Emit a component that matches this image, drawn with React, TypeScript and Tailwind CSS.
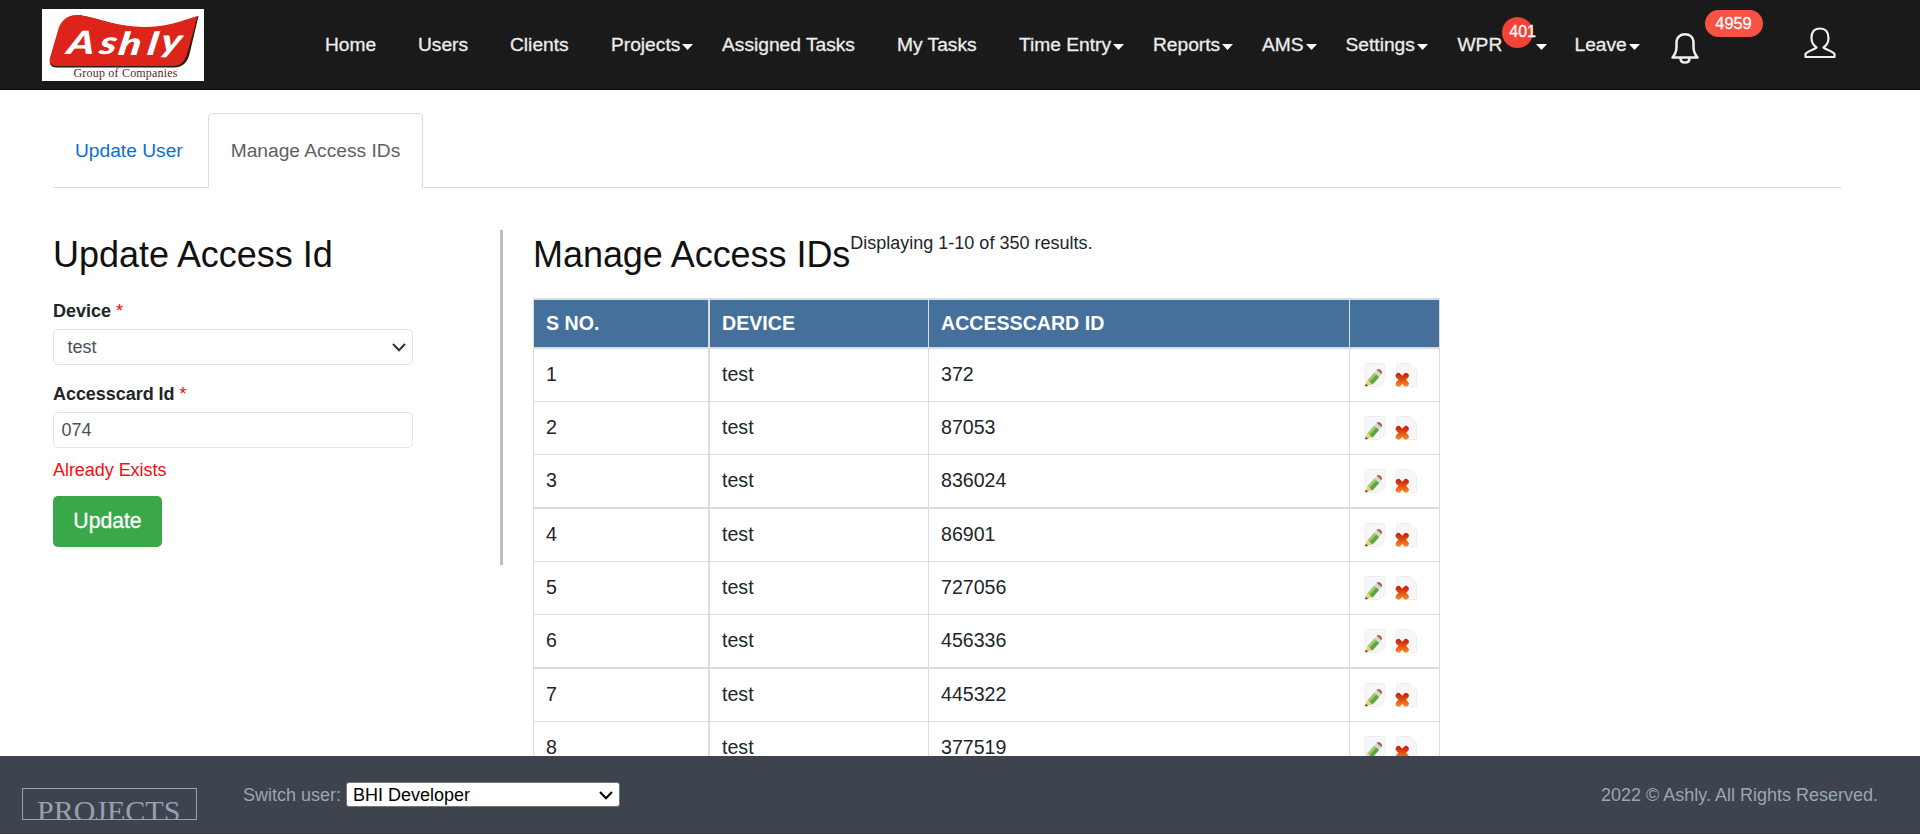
import React from "react";

type NavItem = { label: string; width: string; caret?: boolean; badge?: string };

const navItems: NavItem[] = [
  { label: "Home", width: "w-[93px]" },
  { label: "Users", width: "w-[92px]" },
  { label: "Clients", width: "w-[101px]" },
  { label: "Projects", width: "w-[111px]", caret: true },
  { label: "Assigned Tasks", width: "w-[175px]" },
  { label: "My Tasks", width: "w-[122px]" },
  { label: "Time Entry", width: "w-[134px]", caret: true },
  { label: "Reports", width: "w-[109px]", caret: true },
  { label: "AMS", width: "w-[83.5px]", caret: true },
  { label: "Settings", width: "w-[112px]", caret: true },
  { label: "WPR", width: "w-[117px]", caret: true, badge: "401" },
  { label: "Leave", width: "w-[96px]", caret: true },
];

type Row = { no: number; device: string; card: string; size: string };

const rows: Row[] = [
  { no: 1, device: "test", card: "372", size: "h-[53px] border-b" },
  { no: 2, device: "test", card: "87053", size: "h-[53px] border-b" },
  { no: 3, device: "test", card: "836024", size: "h-[54px] border-b-2" },
  { no: 4, device: "test", card: "86901", size: "h-[53px] border-b" },
  { no: 5, device: "test", card: "727056", size: "h-[53px] border-b" },
  { no: 6, device: "test", card: "456336", size: "h-[54px] border-b-2" },
  { no: 7, device: "test", card: "445322", size: "h-[53px] border-b" },
  { no: 8, device: "test", card: "377519", size: "h-[53px] border-b" },
];

function Logo() {
  return (
    <svg viewBox="0 0 162 72" className="h-[72px] w-[162px] bg-white">
      <path d="M17.500 18.500C23 8 29 5.500 40 6.500C58 10 76 18.500 103 18.500C126 18.500 142 12 156.500 7L148 43C146 53 141 58.500 132 58.500H15C9 58.500 7 55 8 50Z" fill="#2b1a12" />
      <path d="M17 18C22 8 28 5.500 39 6.500C57 9 75 18 102 18C125 18 141 11.500 155.500 7L146 42C143.500 52 139 57 131 57H15C9 57 7 54 8 49Z" fill="#dc241b" />
      <text
        transform="scale(1.3 1) skewX(-7)"
        x="24 49 63.500 86 96"
        y="45 45.500 46 46.500 43.500"
        fontSize="32"
        fontWeight="900"
        fontStyle="italic"
        fontFamily="Lato, sans-serif"
        fill="#fff"
      >
        Ashly
      </text>
      <text x="31.500" y="68" fontSize="12" textLength="104" fontFamily="Liberation Serif, serif" fill="#5b1f1c">Group of Companies</text>
    </svg>
  );
}

function Caret() {
  return (
    <svg viewBox="0 0 11 6" className="mt-[4px] ml-[2px] h-[6px] w-[11px]">
      <path d="M0 0H11L5.5 6Z" fill="#fff" />
    </svg>
  );
}

function Chevron() {
  return (
    <svg viewBox="0 0 14 9" className="h-[9px] w-[14px]" fill="none" stroke="currentColor" strokeWidth="2">
      <path d="M1 1L7 7.2L13 1" />
    </svg>
  );
}

function EditIcon() {
  return (
    <svg viewBox="0 0 22 24" className="h-6 w-[22px]">
      <path d="M3 .5H18.500Q21 .5 21 3V15Q20 21 14 23.500H1V3Q1 .5 3 .5Z" fill="#f6f6f6" stroke="#ededed" />
      <path d="M1.500 23L3.500 16.500L8.500 21.500Z" fill="#f7cf6a" />
      <path d="M1 23.500L1.800 20.500L4.200 22.700Z" fill="#555" />
      <path d="M3.500 17L10.200 9.500L15.200 14L8.500 21.500Z" fill="#9acb78" />
      <path d="M5.500 18.800L12.700 11.200L15.200 14L8.500 21.500Z" fill="#62a63b" />
      <path d="M10.200 9.500L12.600 6.800L17.400 11.300L15.200 14Z" fill="#d3d4dc" />
      <path d="M12.600 6.800Q14.500 5.300 16.800 7Q19 9.500 17.400 11.300Z" fill="#b9603f" />
    </svg>
  );
}

function DeleteIcon() {
  return (
    <svg viewBox="0 0 22 24" className="h-6 w-[22px]">
      <defs>
        <linearGradient id="cross" gradientUnits="userSpaceOnUse" x1="0" y1="10" x2="0" y2="24">
          <stop offset="0" stopColor="#c51a0e" />
          <stop offset="0.5" stopColor="#e2500f" />
          <stop offset="1" stopColor="#f7962a" />
        </linearGradient>
      </defs>
      <path d="M3.500 .5H15L21.500 7V23.500H1.500V3Q1.500 .5 3.500 .5Z" fill="#f6f6f6" stroke="#ededed" />
      <path d="M3.500 12.800L11 20.800M11 12.800L3.500 20.800" stroke="url(#cross)" strokeWidth="5.600" strokeLinecap="round" />
    </svg>
  );
}

export default function App() {
  return (
    <div className="flex h-[834px] w-[1920px] flex-col overflow-hidden bg-white font-['Liberation_Sans',Arial,sans-serif] text-[#212529]">
      <header className="flex h-[90px] shrink-0 border-b border-[#0d0a0d] bg-[#1a1a1a]">
        <div className="mt-[9px] ml-[42px] h-[72px] w-[162px]">
          <Logo />
        </div>
        <nav className="ml-[121px] flex h-[89px] items-center pt-[2px] text-[19.2px] text-[#ececec] [-webkit-text-stroke:0.3px]">
          {navItems.map((item) => (
            <a key={item.label} className={`${item.width} flex items-center whitespace-nowrap`}>
              {item.label}
              {item.badge && (
                <span className="-mt-[26px] mr-[1px] flex size-[31px] shrink-0 items-center rounded-full bg-[#f44336] pl-[7px] text-[16px] text-white">
                  {item.badge}
                </span>
              )}
              {item.caret && <Caret />}
            </a>
          ))}
        </nav>
        <svg viewBox="0 0 28 31" className="mt-[33px] h-[31px] w-[28px]" fill="none" stroke="#f0f0f0" strokeWidth="2.500">
          <path d="M1.500 24.500C4 21.500 5.500 19.500 5.500 14V10C5.500 4 9.500 1.300 14 1.300S22.500 4 22.500 10V14C22.500 19.500 24 21.500 26.500 24.500Z" strokeLinejoin="round" />
          <path d="M9.500 25C9.500 28 11.500 29.600 14 29.600S18.500 28 18.500 25" />
        </svg>
        <span className="mt-[10px] ml-[6px] flex h-[27px] w-[58px] items-center justify-center rounded-full bg-[#f65345] text-[16.400px] text-white [-webkit-text-stroke:0.3px]">4959</span>
        <svg viewBox="0 0 32 32" className="mt-[27px] ml-[41px] size-8" fill="none" stroke="#f0f0f0" strokeWidth="2.200" strokeLinejoin="round">
          <path d="M12.500 20.500C9 18 7.500 15 7.500 11C7.500 5 10 1.500 16 1.500S24.500 5 24.500 11C24.500 15 23 18 19.500 20.500C21 22.500 29 24 30.500 27V30H1.500V27C3 24 11 22.500 12.500 20.500Z" />
        </svg>
      </header>

      <main className="flex h-[666px] shrink-0 flex-col overflow-hidden pl-[53px]">
        <div className="mt-[23px] flex h-[75px] w-[1788px] border-b border-[#dcdcdc] text-[19.2px]">
          <a className="flex h-[75px] w-[155px] items-center pt-[2px] pl-[22px] text-[#0a6fd8]">Update User</a>
          <a className="flex h-[75px] w-[215px] items-center justify-center rounded-t-[5px] border border-b-0 border-[#dcdcdc] bg-white text-[#5f6062]">Manage Access IDs</a>
        </div>

        <div className="flex">
          <section className="mt-[42px] h-[335px] w-[450px] border-r-[3px] border-[#bfbfbf] text-[18px]">
            <h2 className="pt-[4px] text-[36px] leading-[42px] tracking-[-0.03px] text-[#111]">Update Access Id</h2>
            <label className="mt-[24px] block text-[18px] leading-[22px] font-bold">Device <span className="font-normal text-[#f00]">*</span></label>
            <div className="mt-[7px] flex h-9 w-[360px] items-center justify-between rounded-[5px] border border-[#e3e3e3] pr-[6px] pl-[13.500px] text-[#495057]">
              test
              <span className="text-[#333]"><Chevron /></span>
            </div>
            <label className="mt-[18px] block text-[18px] leading-[22px] font-bold tracking-[-0.05px]">Accesscard Id <span className="font-normal text-[#f00]">*</span></label>
            <div className="mt-[7px] flex h-9 w-[360px] items-center rounded-[5px] border border-[#e3e3e3] pl-[7.500px] text-[#495057]">074</div>
            <p className="mt-[11px] leading-[22px] tracking-[-0.05px] text-[#f80c0c]">Already Exists</p>
            <button className="mt-[15px] flex h-[51px] w-[109px] items-center justify-center rounded-[5px] bg-[#38a849] pb-[1px] text-[21.2px] text-white [-webkit-text-stroke:0.3px]">Update</button>
          </section>

          <section className="ml-[30px] w-[907px]">
            <div className="flex h-[110px]">
              <h2 className="mt-[46px] text-[36px] leading-[42px] tracking-[-0.05px] text-[#111]">Manage Access IDs</h2>
              <p className="mt-[44px] text-[18px] leading-[22px]">Displaying 1-10 of 350 results.</p>
            </div>
            <div className="text-[19.600px]">
              <div className="flex h-[51px] border-y-2 border-r border-l border-[#dcdcdc] bg-[#44709b] text-[19.6px] leading-[47px] font-bold text-white">
                <div className="w-[176px] border-r-2 border-[#dcdcdc] pl-[12px]">S NO.</div>
                <div className="w-[219px] border-r border-[#dcdcdc] pl-[12px]">DEVICE</div>
                <div className="w-[421px] border-r border-[#dcdcdc] pl-[12px]">ACCESSCARD ID</div>
              </div>
              {rows.map((row) => (
                <div key={row.no} className={`${row.size} flex border-r border-l border-[#dcdcdc] leading-[50px]`}>
                  <div className="w-[176px] border-r-2 border-[#dcdcdc] pl-[12px]">{row.no}</div>
                  <div className="w-[219px] border-r border-[#dcdcdc] pl-[12px]">{row.device}</div>
                  <div className="w-[421px] border-r border-[#dcdcdc] pl-[12px]">{row.card}</div>
                  <div className="flex gap-[9px] pt-[14px] pl-[14px]">
                    <EditIcon />
                    <DeleteIcon />
                  </div>
                </div>
              ))}
            </div>
          </section>
        </div>
      </main>

      <footer className="flex h-[78px] shrink-0 border-b border-[#33363f] bg-[#3d444d] text-[18px] text-[#98a6b5]">
        <div className="mt-[32px] ml-[22px] h-8 w-[175px] overflow-hidden border border-[#98a0a8] pl-[14px] font-['Liberation_Serif',serif] text-[30px] leading-[44px] text-[#979fb2]">PROJECTS</div>
        <span className="mt-[28px] ml-[46px] w-[103px] leading-[22px]">Switch user:</span>
        <div className="mt-[26px] flex h-[25px] w-[274px] items-center justify-between rounded-[3px] border border-[#767676] bg-white pt-[1px] pr-[6px] pl-[6px] text-black">
          BHI Developer
          <Chevron />
        </div>
        <span className="mt-[28px] mr-[42px] ml-auto leading-[22px]">2022 © Ashly. All Rights Reserved.</span>
      </footer>
    </div>
  );
}
